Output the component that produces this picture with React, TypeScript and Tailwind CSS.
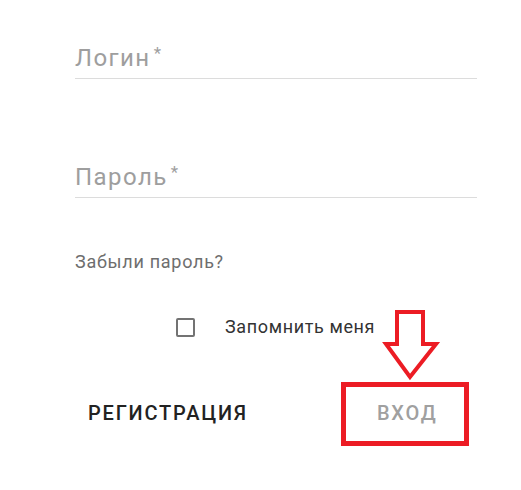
import React from "react";

export default function App() {
  return (
    <div className="relative w-[521px] h-[490px] bg-white font-['Roboto',sans-serif] overflow-hidden">
      <div className="w-[402px] ml-[75px] pt-[44px]">
        {/* Login field */}
        <div className="border-b border-[#dcdcdc] pb-[5px]">
          <span className="text-[24px] leading-[28px] tracking-[0.06em] text-[#9e9e9e]">
            Логин<sup className="text-[17px] ml-[3px] top-[-7px]">*</sup>
          </span>
        </div>

        {/* Password field */}
        <div className="mt-[84px] border-b border-[#dcdcdc] pb-[5px]">
          <span className="text-[24px] leading-[28px] tracking-[0.06em] text-[#9e9e9e]">
            Пароль<sup className="text-[17px] ml-[3px] top-[-7px]">*</sup>
          </span>
        </div>

        <p className="mt-[54px] text-[18px] leading-[20px] tracking-[0.04em] text-[#6e6e6e]">Забыли пароль?</p>

        {/* Remember me */}
        <div className="mt-[45px] flex items-center ml-[101px]">
          <span className="w-[19px] h-[19px] border-2 border-[#737373] rounded-[2px]" />
          <span className="ml-[30px] text-[18px] leading-[20px] tracking-[0.035em] text-[#333]">Запомнить меня</span>
        </div>

        {/* Buttons */}
        <div className="mt-[61px] flex items-center">
          <button className="ml-[13px] text-[20px] font-medium tracking-[0.09em] text-[#222]">РЕГИСТРАЦИЯ</button>
          <button className="ml-[129px] text-[20px] font-medium tracking-[0.09em] text-[#a0a0a0]">ВХОД</button>
        </div>
      </div>

      {/* Annotation: red box */}
      <div className="absolute left-[341px] top-[382px] w-[128px] h-[64px] border-[5px] border-[#ec1c24]" />

      {/* Annotation: arrow */}
      <svg className="absolute left-[380px] top-[305px]" width="62" height="80" viewBox="380 305 62 80">
        <polygon
          points="397,312 423,312 423,344 436,344 410,377 386,344 397,344"
          fill="white"
          stroke="#ec1c24"
          strokeWidth="4"
          strokeLinejoin="miter"
        />
      </svg>
    </div>
  );
}
